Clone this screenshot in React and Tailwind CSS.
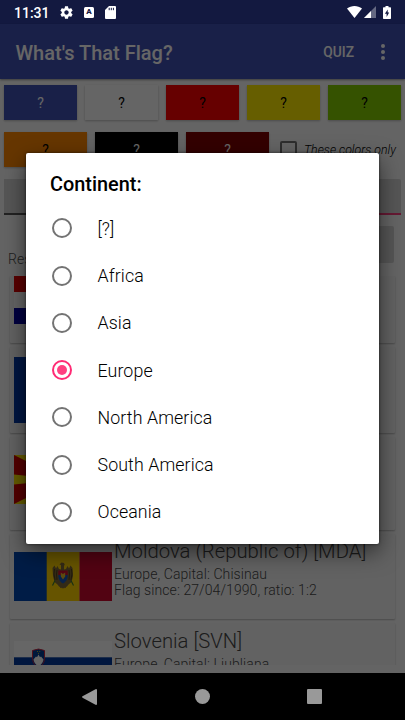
import React, { useState } from 'react'

const CONTINENTS = ['[?]', 'Africa', 'Asia', 'Europe', 'North America', 'South America', 'Oceania']

const TOP_COLORS = [
  { id: 'blue', class: 'bg-[#3f51b5] text-white' },
  { id: 'white', class: 'bg-[#fcfcfc] text-black' },
  { id: 'red', class: 'bg-[#ff0000] text-black' },
  { id: 'yellow', class: 'bg-[#ffeb00] text-black' },
  { id: 'green', class: 'bg-[#84cc00] text-black' },
]

const BOTTOM_COLORS = [
  { id: 'orange', class: 'bg-[#ff8800] text-black' },
  { id: 'black', class: 'bg-black text-white' },
  { id: 'maroon', class: 'bg-[#800000] text-white' },
]

function StatusBar() {
  return (
    <div className="flex h-6 shrink-0 items-center bg-[#131940] pl-[14px] pr-[14px] text-white">
      <span className="w-[35px] pt-px text-[14px] font-medium leading-6">11:31</span>
      <svg className="ml-[10px] h-[15px] w-[15px]" viewBox="0 0 24 24" fill="currentColor">
        <path d="M19.43 12.98c.04-.32.07-.64.07-.98s-.03-.66-.07-.98l2.11-1.65c.19-.15.24-.42.12-.64l-2-3.46c-.12-.22-.39-.3-.61-.22l-2.49 1c-.52-.4-1.08-.73-1.69-.98l-.38-2.65C14.46 2.18 14.25 2 14 2h-4c-.25 0-.46.18-.49.42l-.38 2.65c-.61.25-1.17.59-1.69.98l-2.49-1c-.23-.09-.49 0-.61.22l-2 3.46c-.13.22-.07.49.12.64l2.11 1.65c-.04.32-.07.65-.07.98s.03.66.07.98l-2.11 1.65c-.19.15-.24.42-.12.64l2 3.46c.12.22.39.3.61.22l2.49-1c.52.4 1.08.73 1.69.98l.38 2.65c.03.24.24.42.49.42h4c.25 0 .46-.18.49-.42l.38-2.65c.61-.25 1.17-.59 1.69-.98l2.49 1c.23.09.49 0 .61-.22l2-3.46c.12-.22.07-.49-.12-.64l-2.11-1.65zM12 15.5c-1.93 0-3.5-1.57-3.5-3.5s1.57-3.5 3.5-3.5 3.5 1.57 3.5 3.5-1.57 3.5-3.5 3.5z" />
      </svg>
      <span className="ml-[10px] flex h-[11px] w-[10px] items-center justify-center rounded-[1.5px] bg-white text-[8px] font-black leading-none text-[#131940]">A</span>
      <svg className="ml-[11px] h-[13px] w-[11px]" viewBox="0 0 11 13">
        <path d="M4 0h6a1 1 0 0 1 1 1v11a1 1 0 0 1-1 1H1a1 1 0 0 1-1-1V4z" fill="currentColor" />
        <path d="M4.2 1.8v2.4M6.3 1.8v2.4M8.4 1.8v2.4" stroke="#131940" strokeWidth="1" />
      </svg>
      <svg className="ml-auto h-[12px] w-[15px]" viewBox="0 0 15 12">
        <path d="M0 2.6C4.200-.8 10.800-.8 15 2.600L7.500 12z" fill="currentColor" />
      </svg>
      <svg className="ml-[2px] h-[12px] w-[12px]" viewBox="0 0 12 12">
        <path d="M12 0v12H0z" fill="currentColor" opacity=".35" />
        <path d="M7 5v7H0z" fill="currentColor" />
      </svg>
      <svg className="ml-[7px] h-[13px] w-[8px]" viewBox="0 0 8 13">
        <path d="M2.500 0h3v1.200H7.300a.7.7 0 0 1 .7.7v10.400a.7.7 0 0 1-.7.7H.7a.7.7 0 0 1-.7-.7V1.900a.7.7 0 0 1 .7-.7h1.800z" fill="currentColor" />
        <path d="M4.700 3.500 1.900 7.700h1.700v3.200l2.600-4.400H4.700z" fill="#131940" />
      </svg>
    </div>
  )
}

function AppBar() {
  return (
    <div className="z-0 flex h-[55px] shrink-0 items-center bg-[#3f51b5] pl-[15.500px] pr-[20px] text-white shadow-[0_1px_2px_rgba(0,0,0,0.4)]">
      <h1 className="pt-[2px] text-[20px] font-medium">What's That Flag?</h1>
      <span className="ml-auto pt-px text-[13.800px] font-medium">QUIZ</span>
      <svg className="ml-[27px] h-4 w-1" viewBox="0 0 4 16" fill="currentColor">
        <circle cx="2" cy="2" r="2" />
        <circle cx="2" cy="8" r="2" />
        <circle cx="2" cy="14" r="2" />
      </svg>
    </div>
  )
}

function ColorButton({ color }) {
  return (
    <button className={`h-full flex-1 pt-px text-[14px] shadow-[0_1px_2px_rgba(0,0,0,0.25)] ${color.class}`}>?</button>
  )
}

function Filters() {
  return (
    <div className="shrink-0 px-1 pt-[6px]">
      <div className="flex h-[35px] gap-2">
        {TOP_COLORS.map(c => <ColorButton key={c.id} color={c} />)}
      </div>
      <div className="mt-3 flex h-[35px]">
        <div className="flex w-[265px] gap-2">
          {BOTTOM_COLORS.map(c => <ColorButton key={c.id} color={c} />)}
        </div>
        <label className="flex items-center pl-[11px]">
          <span className="h-[17px] w-[17px] rounded-[2px] border-2 border-[#737373]" />
          <span className="ml-[7px] whitespace-nowrap pt-[2px] text-[12.300px] font-light italic text-black">These colors only</span>
        </label>
      </div>
      <div className="mt-3 flex h-[36px]">
        <div className="flex-1 border-b-2 border-[#555555] bg-[#d6d6d6]" />
        <div className="flex-1 rounded-tr-[2px] border-b-2 border-[#ff4081] bg-[#d6d6d6]" />
      </div>
      <div className="mt-[11px] flex h-[50px] justify-between pl-1 pr-[7px]">
        <span className="mt-[24px] text-[14px] font-light leading-[18px] text-[#505050]">Results:</span>
        <div className="h-[37px] w-[120px] rounded-[2px] bg-[#d6d6d6]" />
      </div>
    </div>
  )
}

function MoldovaFlag() {
  return (
    <svg className="block h-[49px] w-[98px]" viewBox="0 0 98 49">
      <rect width="33" height="49" fill="#0046ae" />
      <rect x="32.700" width="33" height="49" fill="#ffd200" />
      <rect x="65.500" width="32.500" height="49" fill="#cc092f" />
      {/* Eagle: wings, head, legs, then the shield on its chest */}
      <path d="M38.500 16l2-2.500 1.500 3 1.500-2.500 1.500 3 2 .5v-4.500l-1.500-.5 2-2 2.500.5.800 2-.8.500v4l2-.5 1.500-3 1.500 2.500 1.500-3 2 2.500.5 8-1.500 6-3 2.500-1.500 2-4 2-4-2-1.500-2-3-2.500-1.500-6z" fill="#806a38" />
      <path d="M40.500 17l-.5 5 1 6M43 18l-.5 4 .5 6M57.500 17l.5 5-1 6M55 18l.5 4-.5 6" stroke="#463818" strokeWidth=".8" fill="none" />
      <path d="M44.300 18.500h9.400V23h-9.400z" fill="#d01030" />
      <path d="M44.300 23h9.400c0 4.500-2 7-4.700 8.500-2.700-1.500-4.700-4-4.700-8.500z" fill="#1455bb" />
      <path d="M46.800 20.500l2.200 1.500 2.200-1.500v4l-2.200 3-2.200-3z" fill="#e8b928" />
      <path d="M41 28.500l-2.500 5M57 28.500l2.500 5" stroke="#3d7a2d" strokeWidth="1.200" />
      <path d="M47.500 33l-.8 3M50.500 33l.8 3" stroke="#806a38" strokeWidth="1.400" />
    </svg>
  )
}

function SloveniaFlag() {
  return (
    <svg className="block h-[49px] w-[98px]" viewBox="0 0 98 49">
      <rect width="98" height="49" fill="#ffffff" />
      <rect y="16.300" width="98" height="16.700" fill="#00389c" />
      <rect y="33" width="98" height="16" fill="#ee1c25" />
      <path d="M18.500 9.500q6-3 12 0v7c0 5-2 8-6 10-4-2-6-5-6-10z" fill="#003d95" stroke="#d32235" strokeWidth=".9" />
      <path d="M19.500 18.500l2.500-3 1 .8 1.500-2.800 1.500 2.800 1-.8 2.500 3c-.5 3-2 5-5 7-3-2-4.500-4-5-7z" fill="#ffffff" />
      <path d="M23 10.500h.8M25.400 10.500h.8M24.200 12.400h.8" stroke="#ffdd00" strokeWidth=".9" />
    </svg>
  )
}

function MacedoniaFlag() {
  return (
    <svg className="block h-[49px] w-[98px]" viewBox="0 0 98 49">
      <rect width="98" height="49" fill="#d20000" />
      <path d="M0 0h15l34 24.500zM98 0H83L49 24.500zM0 49h15l34-24.500zM98 49H83L49 24.500zM0 19.500v10l49-5zM98 19.500v10l-49-5zM44 0h10l-5 24.500zM44 49h10l-5-24.500z" fill="#ffe600" />
      <circle cx="49" cy="24.500" r="8" fill="#ffe600" />
    </svg>
  )
}

function FlagCard({ className, flag, name, lines }) {
  return (
    <div className={`flex shrink-0 rounded-[1px] bg-[#f5f5f5] pl-1 shadow-[0_1px_2px_rgba(0,0,0,0.28)] ${className}`}>
      <div className="w-[98px] shrink-0">{flag}</div>
      {name && (
        <div className="ml-[2px] whitespace-nowrap text-[#484848]">
          <div className="text-[20.300px] font-light leading-[25px]">{name}</div>
          <div className="pt-[2px]">
            {lines.map(line => (
              <div key={line} className="text-[14px] font-light leading-[16px] tracking-[0.080px]">{line}</div>
            ))}
          </div>
        </div>
      )}
    </div>
  )
}

function Results() {
  return (
    <div className="flex h-[389px] shrink-0 flex-col gap-[4px] overflow-hidden pl-[10px] pr-[10px]">
      <FlagCard
        className="h-[67px]"
        flag={
          <div className="h-12">
            <div className="h-4 bg-[#e00000]" />
            <div className="h-4 bg-white" />
            <div className="h-4 bg-[#0000a0]" />
          </div>
        }
      />
      <FlagCard className="h-[86px] pt-[10px]" flag={<div className="h-[66px] bg-[#0039a6]" />} />
      <FlagCard className="h-[93px] pt-[18px]" flag={<MacedoniaFlag />} />
      <FlagCard
        className="h-[85px] pt-[5px]"
        flag={<div className="pt-[13px]"><MoldovaFlag /></div>}
        name="Moldova (Republic of) [MDA]"
        lines={['Europe, Capital: Chisinau', 'Flag since: 27/04/1990, ratio: 1:2']}
      />
      <FlagCard
        className="h-[85px] pt-[6px]"
        flag={<div className="pt-[12px]"><SloveniaFlag /></div>}
        name="Slovenia [SVN]"
        lines={['Europe, Capital: Ljubljana']}
      />
    </div>
  )
}

function Radio({ checked }) {
  return (
    <span className={`flex h-5 w-5 shrink-0 items-center justify-center rounded-full border-2 ${checked ? 'border-[#ff2a74]' : 'border-[#737373]'}`}>
      {checked && <span className="h-[10px] w-[10px] rounded-full bg-[#ff4081]" />}
    </span>
  )
}

function ContinentDialog({ value, onChange }) {
  return (
    <div className="absolute left-[26px] top-[128.500px] h-[391px] w-[353px] rounded-[2px] bg-white shadow-[0_8px_22px_rgba(0,0,0,0.55),0_0_3px_rgba(0,0,0,0.6)]">
      <h2 className="pl-6 pt-[18.500px] text-[19.900px] font-medium leading-7 text-black">Continent:</h2>
      <div className="pt-[5.700px]">
        {CONTINENTS.map(name => (
          <button key={name} onClick={() => onChange(name)} className="flex h-[47.250px] w-full items-center pl-[26px] text-left">
            <Radio checked={name === value} />
            <span className="ml-[25.500px] pt-[2px] text-[17.800px] font-light tracking-[0.100px] text-black">{name}</span>
          </button>
        ))}
      </div>
    </div>
  )
}

function NavBar() {
  return (
    <div className="flex h-[47px] shrink-0 items-center bg-black pl-[82px] text-[#999999]">
      <svg className="h-4 w-[15px]" viewBox="0 0 15 16" fill="currentColor">
        <path d="M14 0Q15 0 15 1v14q0 1-1 1L.5 8.700Q-.3 8 .5 7.300z" />
      </svg>
      <span className="ml-[98px] h-[15px] w-[15px] rounded-full bg-[#999999]" />
      <span className="ml-[96.500px] h-[15px] w-[15px] rounded-[1px] bg-[#999999]" />
    </div>
  )
}

export default function App() {
  const [continent, setContinent] = useState('Europe')

  return (
    <div className="flex h-[720px] w-[405px] flex-col overflow-hidden font-['Roboto',sans-serif]">
      <StatusBar />
      <div className="relative flex h-[649px] shrink-0 flex-col bg-[#fafafa]">
        <AppBar />
        <Filters />
        <Results />
        {/* Dim layer and dialog */}
        <div className="absolute inset-0 bg-black/60">
          <ContinentDialog value={continent} onChange={setContinent} />
        </div>
      </div>
      <NavBar />
    </div>
  )
}
